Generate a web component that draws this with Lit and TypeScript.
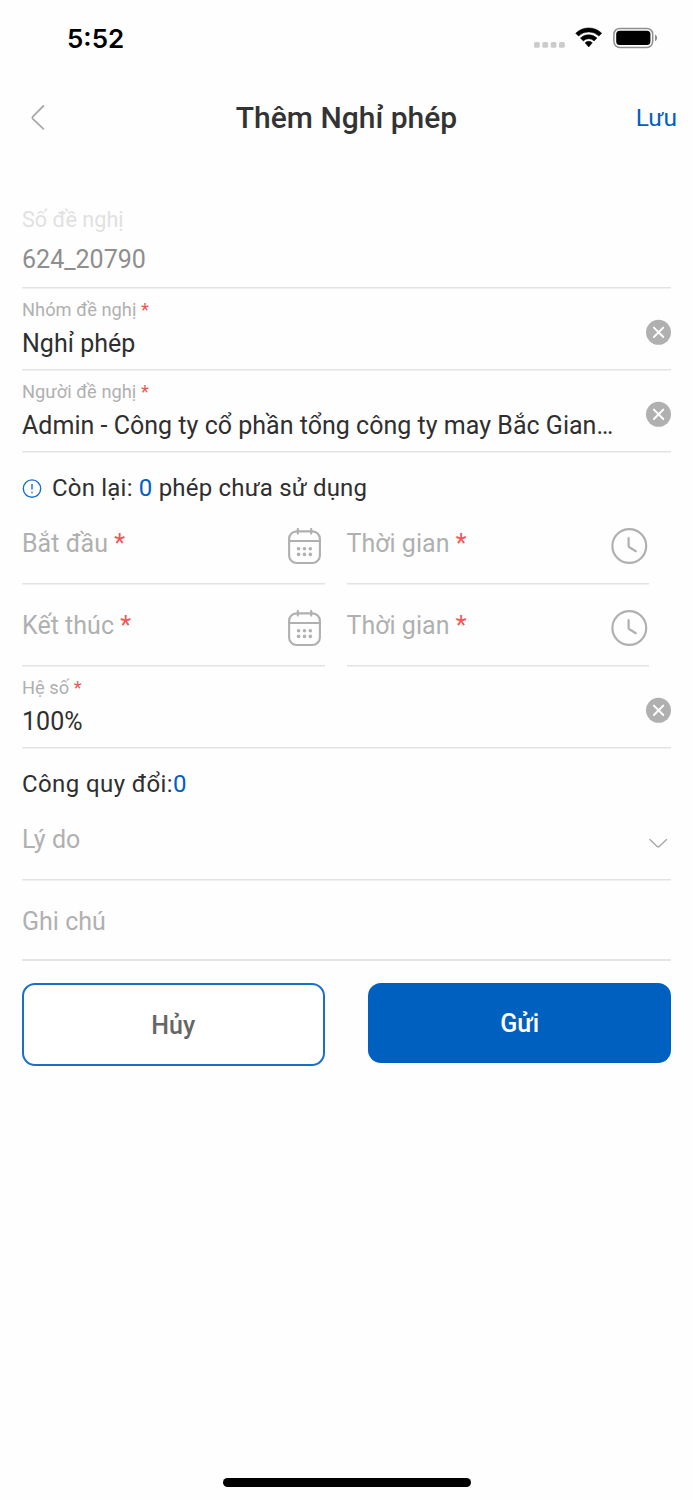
import { LitElement, html, css, svg } from "lit";
import { customElement, property } from "lit/decorators.js";

const clearIcon = html`<svg class="icon" width="25" height="26" viewBox="0 0 25 26" fill="none">
  <circle cx="12.5" cy="13.3" r="12.5" fill="#b0b0b0" />
  <path d="M7.9 8.6l9.4 9.4M17.3 8.6l-9.4 9.4" stroke="#fff" stroke-width="1.9" stroke-linecap="round" />
</svg>`;

const calendarDots = [10.6, 16.5, 22.3].map(
  (x) => svg`<circle cx=${x} cy="20.7" r="1.8" /><circle cx=${x} cy="26.4" r="1.8" />`
);

const calendarIcon = html`<svg class="icon" width="33" height="37" viewBox="0 0 33 37" fill="none" stroke="#b0b0b0" stroke-width="2.1">
  <rect x="1.1" y="3.4" width="30.8" height="31.6" rx="7.5" />
  <path d="M1 13h31M9.8 1v4.6M23.2 1v4.6" stroke-linecap="round" />
  <g fill="#b0b0b0" stroke="none">${calendarDots}</g>
</svg>`;

const clockIcon = html`<svg class="icon" width="37" height="37" viewBox="0 0 37 37" fill="none" stroke="#b0b0b0" stroke-width="2.2" stroke-linecap="round" stroke-linejoin="round">
  <circle cx="18.3" cy="18" r="16.9" />
  <path d="M17.6 10.2v7.6q0 1 .8 1.5l6.4 3.9" />
</svg>`;

const chevronDown = html`<svg class="icon" width="20" height="12" viewBox="0 0 20 12" fill="none" stroke="#a8a8a8" stroke-width="1.4" stroke-linecap="round" stroke-linejoin="round">
  <path d="M1.9 1.4l7.2 7q1.1.9 2.2 0l7.2-7" />
</svg>`;

@customElement("form-field")
export class FormField extends LitElement {
  @property() label = "";
  @property() value = "";
  @property() kind = "filled";
  @property({ type: Boolean }) required = false;

  static styles = css`
    :host {
      display: flex;
      box-sizing: border-box;
      height: 82px;
      border-bottom: 1px solid #e3e3e3;
      box-shadow: 0 1px 0 #f1f1f1;
      justify-content: space-between;
      font-size: 25px;
      line-height: 30px;
      letter-spacing: 0.02px;
    }
    .text {
      display: flex;
      flex-direction: column;
      white-space: nowrap;
    }
    .label {
      color: #b0b0b0;
      font-size: 18.3px;
      line-height: 24px;
      padding-top: 10px;
    }
    .value {
      color: #2f2f2f;
      padding-top: 7px;
    }
    .placeholder {
      color: #b0b0b0;
      padding-top: 27px;
    }
    .locked-label {
      color: #e1e1e1;
      font-size: 21.6px;
      line-height: 28px;
    }
    .locked-value {
      color: #8e8e8e;
      padding-top: 11px;
    }
    .star {
      color: #f25555;
    }
    .action {
      display: flex;
      padding-top: 31px;
    }
    .action.large {
      padding-top: 26px;
      margin-right: 1.5px;
    }
    .action.date {
      margin-right: 3.5px;
    }
    .action.chevron {
      padding-top: 40px;
      margin-right: 3px;
    }
    .icon {
      display: block;
    }
  `;

  render() {
    const star = this.required ? html` <span class="star">*</span>` : "";
    if (this.kind === "locked") {
      return html`<div class="text">
        <span class="locked-label">${this.label}</span>
        <span class="locked-value">${this.value}</span>
      </div>`;
    }
    if (this.kind === "filled") {
      return html`<div class="text">
          <span class="label">${this.label}${star}</span>
          <span class="value">${this.value}</span>
        </div>
        <div class="action">${clearIcon}</div>`;
    }
    const action =
      this.kind === "date"
        ? html`<div class="action large date">${calendarIcon}</div>`
        : this.kind === "time"
          ? html`<div class="action large">${clockIcon}</div>`
          : this.kind === "select"
            ? html`<div class="action chevron">${chevronDown}</div>`
            : "";
    return html`<div class="text"><span class="placeholder">${this.label}${star}</span></div>${action}`;
  }
}

@customElement("app-root")
export class AppRoot extends LitElement {
  static styles = css`
    :host {
      display: flex;
      flex-direction: column;
      box-sizing: border-box;
      width: 693px;
      height: 1500px;
      background: #fefefe;
      font-family: Roboto, "Noto Sans", sans-serif;
      color: #2f2f2f;
      overflow: hidden;
    }
    .status {
      display: flex;
      justify-content: space-between;
      height: 76px;
      padding: 0 36px 0 67px;
      box-sizing: border-box;
    }
    .time {
      font: 600 26px/32px Inter, sans-serif;
      color: #000;
      padding-top: 23px;
    }
    .indicators {
      display: flex;
      padding-top: 26px;
    }
    .header {
      display: grid;
      grid-template-columns: 1fr auto 1fr;
      height: 130px;
      padding: 0 16px 0 30px;
      box-sizing: border-box;
    }
    .back {
      padding-top: 28px;
    }
    .title {
      margin: 0;
      padding-top: 24px;
      font-size: 30px;
      line-height: 36px;
      font-weight: 500;
      color: #333;
      margin-right: 14px;
    }
    .save {
      justify-self: end;
      padding-top: 27px;
      font-size: 24.5px;
      line-height: 30px;
      color: #0060c3;
    }
    .form {
      display: flex;
      flex-direction: column;
      padding: 0 22px;
    }
    .pair {
      display: flex;
      gap: 22px;
    }
    .pair form-field {
      width: 302.5px;
    }
    .note {
      display: flex;
      align-items: flex-start;
      font-size: 24px;
      line-height: 30px;
      letter-spacing: 0.2px;
      white-space: pre;
      box-sizing: border-box;
      height: 50px;
      padding-top: 21px;
    }
    .note.total {
      letter-spacing: 0.4px;
    }
    .info {
      margin: 6px 10px 0 0;
    }
    .blue {
      color: #0060c3;
    }
    .memo {
      height: 81px;
      border-bottom: 2px solid #e4e4e4;
      box-shadow: none;
    }
    .actions {
      display: flex;
      justify-content: space-between;
      align-items: flex-start;
      padding-top: 22px;
    }
    .button {
      box-sizing: border-box;
      width: 302.6px;
      border-radius: 13px;
      font: 500 25px/30px Roboto, sans-serif;
      text-align: center;
      padding: 0;
    }
    .cancel {
      height: 83px;
      border: 2px solid #1a6fc9;
      background: #fff;
      color: #666;
      padding-top: 2px;
    }
    .send {
      height: 80px;
      border: 0;
      background: #0060c0;
      color: #fff;
      padding-top: 2px;
    }
    .spacer {
      flex: 1;
    }
    .home {
      align-self: center;
      width: 248px;
      height: 9px;
      border-radius: 5px;
      background: #000;
      margin-bottom: 13px;
    }
  `;

  render() {
    return html`
      <div class="status">
        <div class="time">5:52</div>
        <div class="indicators">
          <svg width="125" height="24" viewBox="532 26 125 24">
            <g fill="#cbcbcb">
              ${[534, 542.3, 550.7, 559].map(
                (x) => svg`<rect x=${x} y="42" width="5.8" height="5.8" rx="1.6" />`
              )}
            </g>
            <path d="M575.7 33.2a18.6 18.6 0 0 1 26 0l-2.8 2.9a14.6 14.6 0 0 0-20.4 0zM580.4 38a12 12 0 0 1 16.6 0l-2.9 2.9a7.9 7.9 0 0 0-10.8 0zM585.1 42.8a5.2 5.2 0 0 1 7.2 0l-3.6 4.2z" fill="#000" stroke="#000" stroke-width=".5" stroke-linejoin="round" />
            <rect x="613.9" y="28.4" width="38.8" height="19" rx="5.8" fill="none" stroke="#8e8e8e" stroke-width="1.5" />
            <rect x="616.2" y="30.7" width="34.2" height="14.4" rx="3.5" fill="#000" />
            <path d="M655 34.6q2.1 1 2.1 3.3t-2.1 3.3z" fill="#8e8e8e" />
          </svg>
        </div>
      </div>
      <header class="header">
        <div class="back">
          <svg width="16" height="28" viewBox="0 0 16 28" fill="none" stroke="#a9a9a9" stroke-width="1.8" stroke-linecap="round" stroke-linejoin="round">
            <path d="M13.4 2L2.8 12.7q-1 1.1 0 2.2L13.4 24.8" />
          </svg>
        </div>
        <h1 class="title">Thêm Nghỉ phép</h1>
        <div class="save">Lưu</div>
      </header>
      <main class="form">
        <form-field kind="locked" label="Số đề nghị" value="624_20790"></form-field>
        <form-field label="Nhóm đề nghị" value="Nghỉ phép" required></form-field>
        <form-field label="Người đề nghị" value="Admin - Công ty cổ phần tổng công ty may Bắc Gian…" required></form-field>
        <div class="note">
          <svg class="info" width="20" height="20" viewBox="0 0 20 20" fill="none" stroke="#1a6fc9">
            <circle cx="10" cy="9.6" r="8.7" stroke-width="1.4" />
            <path d="M10 5v5.6M10 12.7v1.6" stroke-width="1.4" />
          </svg><span>Còn lại: <span class="blue">0</span> phép chưa sử dụng</span>
        </div>
        <div class="pair">
          <form-field kind="date" label="Bắt đầu" required></form-field>
          <form-field kind="time" label="Thời gian" required></form-field>
        </div>
        <div class="pair">
          <form-field kind="date" label="Kết thúc" required></form-field>
          <form-field kind="time" label="Thời gian" required></form-field>
        </div>
        <form-field label="Hệ số" value="100%" required></form-field>
        <div class="note total"><span>Công quy đổi:<span class="blue">0</span></span></div>
        <form-field kind="select" label="Lý do"></form-field>
        <form-field class="memo" kind="memo" label="Ghi chú"></form-field>
        <div class="actions">
          <button class="button cancel">Hủy</button>
          <button class="button send">Gửi</button>
        </div>
      </main>
      <div class="spacer"></div>
      <div class="home"></div>
    `;
  }
}
